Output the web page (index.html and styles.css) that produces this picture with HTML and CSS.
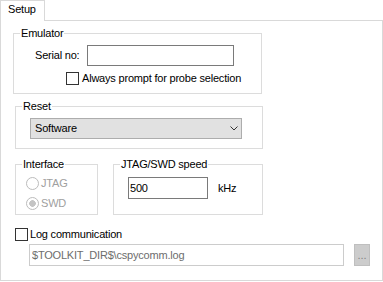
FILE: index.html
```html
<!DOCTYPE html>
<html lang="en">
<head>
    <meta charset="UTF-8">
    <title>Setup</title>
    <link rel="stylesheet" href="styles.css">
</head>
<body>

    <div class="tabs">
        <div class="tab">Setup</div>
    </div>

    <div class="page">
        <div class="group emulator">
            <span class="group-title">Emulator</span>
            <div class="serial-row">
                <label for="serial">Serial no:</label>
                <input type="text" id="serial" class="edit serial-edit">
            </div>
            <label class="check probe"><input type="checkbox"><span>Always prompt for probe selection</span></label>
        </div>

        <div class="group reset">
            <span class="group-title">Reset</span>
            <div class="combo">
                <span>Software</span>
                <svg width="8" height="5" viewBox="0 0 8 5"><path d="M0.5 0.5 L4 4 L7.5 0.5" fill="none" stroke="#333" stroke-width="1"/></svg>
            </div>
        </div>

        <div class="pair">
            <div class="group iface">
                <span class="group-title">Interface</span>
                <label class="radio"><input type="radio" name="iface" disabled><span>JTAG</span></label>
                <label class="radio"><input type="radio" name="iface" checked disabled><span>SWD</span></label>
            </div>
            <div class="group speed">
                <span class="group-title">JTAG/SWD speed</span>
                <div class="speed-row">
                    <input type="text" class="edit speed-edit" value="500">
                    <span class="unit">kHz</span>
                </div>
            </div>
        </div>

        <label class="check log"><input type="checkbox"><span>Log communication</span></label>
        <div class="path-row">
            <input type="text" class="edit path-edit" value="$TOOLKIT_DIR$\cspycomm.log" disabled>
            <button class="browse" disabled>...</button>
        </div>
    </div>

</body>
</html>
```

FILE: styles.css
```css
* {
    box-sizing: border-box;
}
body {
    margin: 0;
    width: 383px;
    height: 282px;
    overflow: hidden;
    background: #fff;
    color: #000;
    font-family: "Liberation Sans", Arial, sans-serif;
    font-size: 11px;
    line-height: 13px;
    letter-spacing: -0.2px;
}
.tabs {
    display: flex;
    height: 20px;
}
.tab {
    position: relative;
    z-index: 1;
    width: 45px;
    height: 21px;
    padding: 2px 0 0 7px;
    background: #fff;
    border: 1px solid #d9d9d9;
    border-bottom: none;
}
.page {
    width: 383px;
    height: 261px;
    border: 1px solid #d9d9d9;
}
.group {
    position: relative;
    border: 1px solid #dcdcdc;
}
.group-title {
    position: absolute;
    top: -7px;
    left: 6px;
    padding: 0 1px;
    background: #fff;
}
.edit {
    margin: 0;
    font: inherit;
    letter-spacing: inherit;
    color: #000;
    background: #fff;
    border: 1px solid #7a7a7a;
    outline: none;
    padding: 0 1px;
}

/* Emulator */
.emulator {
    margin: 12px 0 0 12px;
    width: 249px;
    height: 61px;
    padding-top: 11px;
}
.serial-row {
    display: flex;
    align-items: center;
    padding-left: 21px;
}
.serial-row label {
    width: 52px;
}
.serial-edit {
    width: 147px;
    height: 21px;
}
.check {
    display: flex;
    align-items: center;
    gap: 3px;
}
.check input {
    appearance: none;
    margin: 0;
    width: 13px;
    height: 13px;
    border: 1px solid #333;
    background: #fff;
}
.probe {
    margin: 6px 0 0 52px;
}

/* Reset */
.reset {
    margin: 12px 0 0 14px;
    width: 248px;
    height: 43px;
    padding-top: 11px;
}
.combo {
    display: flex;
    align-items: center;
    margin-left: 14px;
    width: 212px;
    height: 21px;
    padding: 0 3px 0 4px;
    background: #e1e1e1;
    border: 1px solid #adadad;
}
.combo svg {
    margin-left: auto;
}

/* Interface + speed */
.pair {
    display: flex;
    margin: 15px 0 0 14px;
}
.iface {
    width: 83px;
    height: 51px;
    padding: 12px 0 0 10px;
    display: flex;
    flex-direction: column;
    gap: 7px;
}
.radio {
    display: flex;
    align-items: center;
    gap: 2px;
    color: #a0a0a0;
}
.radio input {
    appearance: none;
    margin: 0;
    width: 13px;
    height: 13px;
    border: 1px solid #bcbcbc;
    border-radius: 50%;
    background: #fff;
}
.radio input:checked {
    background: radial-gradient(circle, #c4c4c4 3px, #fff 3.6px);
}
.speed {
    margin-left: 15px;
    width: 150px;
    height: 51px;
    padding-top: 12px;
}
.speed-row {
    display: flex;
    align-items: center;
    padding-left: 14px;
}
.speed-edit {
    width: 80px;
    height: 22px;
}
.unit {
    margin-left: 10px;
}

/* Log */
.log {
    margin: 13px 0 0 14px;
    gap: 2px;
}
.path-row {
    display: flex;
    margin: 3px 0 0 28px;
}
.path-edit {
    width: 315px;
    height: 22px;
    padding-left: 2px;
    color: #6d6d6d;
    border-color: #cccccc;
}
.browse {
    margin-left: 10px;
    width: 16px;
    height: 22px;
    padding: 0;
    font: inherit;
    color: #838383;
    background: #cccccc;
    border: 1px solid #bfbfbf;
    line-height: 14px;
}
```
